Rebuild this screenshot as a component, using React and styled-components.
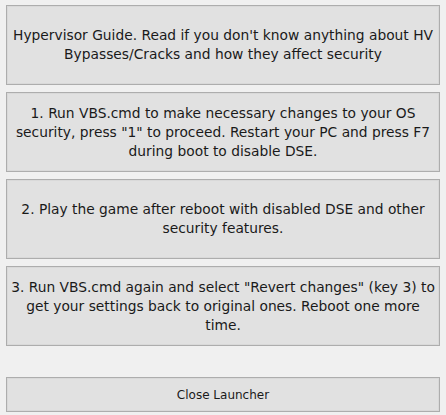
import React from "react";
import styled, { createGlobalStyle } from "styled-components";

const GlobalStyle = createGlobalStyle`
  html, body {
    margin: 0;
    padding: 0;
    background: #f0f0f0;
  }
`;

const Window = styled.div`
  width: 446px;
  height: 415px;
  box-sizing: border-box;
  padding: 5px 6px 0 6px;
  display: flex;
  flex-direction: column;
  font-family: "DejaVu Sans", Tahoma, sans-serif;
`;

const StepList = styled.div`
  display: flex;
  flex-direction: column;
  gap: 7px;
`;

const Button = styled.button`
  width: 434px;
  height: ${(p) => p.$height}px;
  box-sizing: border-box;
  margin: 0;
  padding: 0 3px;
  background: #e1e1e1;
  border: 1px solid #adadad;
  box-shadow: inset 0 0 0 1px #d9d9d9;
  color: #1a1a1a;
  font-family: inherit;
  font-size: 13.8px;
  line-height: 19px;
  text-align: center;
  cursor: default;
`;

const CloseButton = styled(Button)`
  margin-top: 31px;
  padding-top: 1px;
  font-size: 12px;
`;

const steps = [
  "Hypervisor Guide. Read if you don't know anything about HV Bypasses/Cracks and how they affect security",
  '1. Run VBS.cmd to make necessary changes to your OS security, press "1" to proceed. Restart your PC and press F7 during boot to disable DSE.',
  "2. Play the game after reboot with disabled DSE and other security features.",
  '3. Run VBS.cmd again and select "Revert changes" (key 3) to get your settings back to original ones. Reboot one more time.',
];

export default function App() {
  return (
    <>
      <GlobalStyle />
      <Window>
        <StepList>
          {steps.map((text) => (
            <Button key={text} $height={80}>
              {text}
            </Button>
          ))}
        </StepList>
        <CloseButton $height={35}>Close Launcher</CloseButton>
      </Window>
    </>
  );
}
